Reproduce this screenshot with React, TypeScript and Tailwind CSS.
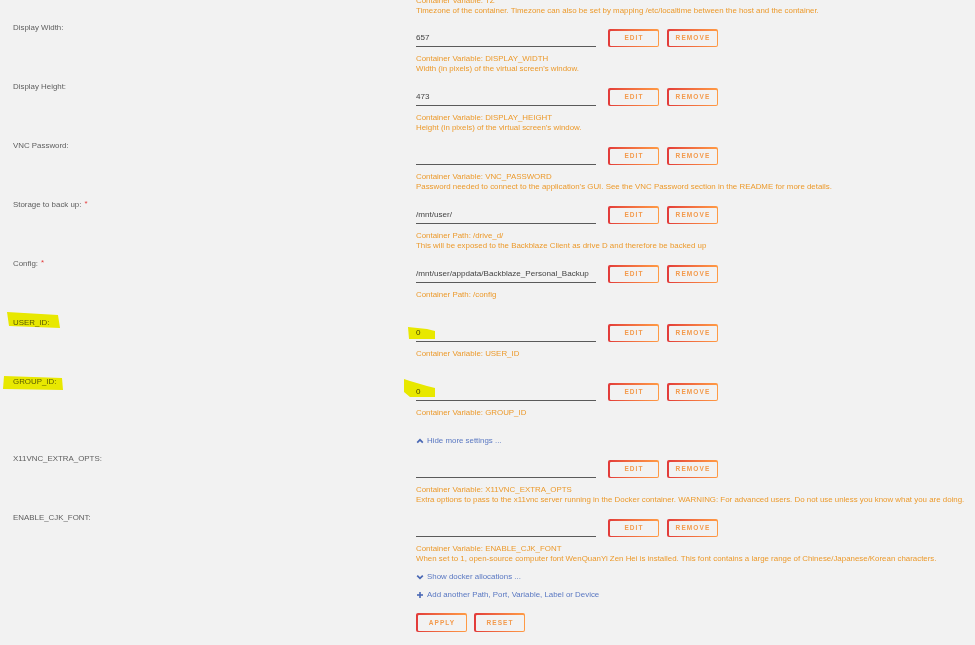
import React from "react";

type Row = {
  label: string;
  required?: boolean;
  value: string;
  desc: string[];
};

const rows1: Row[] = [
  { label: "Display Width:", value: "657", desc: ["Container Variable: DISPLAY_WIDTH", "Width (in pixels) of the virtual screen's window."] },
  { label: "Display Height:", value: "473", desc: ["Container Variable: DISPLAY_HEIGHT", "Height (in pixels) of the virtual screen's window."] },
  { label: "VNC Password:", value: "", desc: ["Container Variable: VNC_PASSWORD", "Password needed to connect to the application's GUI. See the VNC Password section in the README for more details."] },
  { label: "Storage to back up:", required: true, value: "/mnt/user/", desc: ["Container Path: /drive_d/", "This will be exposed to the Backblaze Client as drive D and therefore be backed up"] },
  { label: "Config:", required: true, value: "/mnt/user/appdata/Backblaze_Personal_Backup", desc: ["Container Path: /config"] },
  { label: "USER_ID:", value: "0", desc: ["Container Variable: USER_ID"] },
  { label: "GROUP_ID:", value: "0", desc: ["Container Variable: GROUP_ID"] },
];

const rows2: Row[] = [
  { label: "X11VNC_EXTRA_OPTS:", value: "", desc: ["Container Variable: X11VNC_EXTRA_OPTS", "Extra options to pass to the x11vnc server running in the Docker container. WARNING: For advanced users. Do not use unless you know what you are doing."] },
  { label: "ENABLE_CJK_FONT:", value: "", desc: ["Container Variable: ENABLE_CJK_FONT", "When set to 1, open-source computer font WenQuanYi Zen Hei is installed. This font contains a large range of Chinese/Japanese/Korean characters."] },
];

function Btn({ text, h = 18 }: { text: string; h?: number }) {
  return (
    <div
      className="w-[51px] rounded-[2px] bg-gradient-to-r from-[#e23a3a] to-[#ff9b45] p-[1.5px]"
      style={{ height: h }}
    >
      <div className="flex h-full w-full items-center justify-center rounded-[1px] bg-[#f2f2f2] pl-[1px] text-[6.5px] font-bold tracking-[1.1px] text-[#f39a4c]">
        {text}
      </div>
    </div>
  );
}

function FieldRow({ row }: { row: Row }) {
  return (
    <div className="flex h-[59px]">
      <div className="w-[416px] shrink-0 pl-[13px] text-[7.9px] leading-[10px] text-[#5e5e5e]">
        {row.label}
        {row.required && <span className="relative -top-[1px] ml-[3px] text-[#e53b3b]">*</span>}
      </div>
      <div className="flex flex-col pt-[6px]">
        <div className="flex h-[18px] items-start">
          <div className="h-[18px] w-[180px] border-b-[1.6px] border-[#5a5a5a] text-[8.1px] leading-[17px] text-[#444]">
            {row.value}
          </div>
          <div className="ml-[12px] flex gap-[8px]">
            <Btn text="EDIT" />
            <Btn text="REMOVE" />
          </div>
        </div>
        <div className="mt-[7px] whitespace-nowrap text-[7.9px] leading-[10px] text-[#ec9a2c]">
          {row.desc.map((d, i) => (
            <div key={i}>{d}</div>
          ))}
        </div>
      </div>
    </div>
  );
}

function LinkLine({ icon, text }: { icon: "up" | "down" | "plus"; text: string }) {
  return (
    <div className="flex h-[10px] items-center pl-[416px] text-[7.9px] leading-[10px] text-[#5a78c2]">
      <svg width="8" height="8" viewBox="0 0 8 8" className="mr-[3px]">
        {icon === "up" && <polyline points="1.2,5.6 4,2.8 6.8,5.6" fill="none" stroke="#4a68b4" strokeWidth="1.7" />}
        {icon === "down" && <polyline points="1.2,2.6 4,5.4 6.8,2.6" fill="none" stroke="#4a68b4" strokeWidth="1.7" />}
        {icon === "plus" && (
          <g stroke="#4a68b4" strokeWidth="1.6">
            <line x1="4" y1="1" x2="4" y2="7" />
            <line x1="1" y1="4" x2="7" y2="4" />
          </g>
        )}
      </svg>
      <span>{text}</span>
    </div>
  );
}

export default function App() {
  return (
    <div className="relative h-[645px] w-[975px] overflow-hidden bg-[#f2f2f2] font-['Liberation_Sans',Arial,sans-serif]">
      <div className="mt-[-4px] whitespace-nowrap pl-[416px] text-[7.9px] leading-[10px] text-[#ec9a2c]">
        <div>Container Variable: TZ</div>
        <div>Timezone of the container. Timezone can also be set by mapping /etc/localtime between the host and the container.</div>
      </div>
      <div className="mt-[7px]">
        {rows1.map((r) => (
          <FieldRow key={r.label} row={r} />
        ))}
      </div>
      <LinkLine icon="up" text="Hide more settings ..." />
      <div className="mt-[8px]">
        {rows2.map((r) => (
          <FieldRow key={r.label} row={r} />
        ))}
      </div>
      <LinkLine icon="down" text="Show docker allocations ..." />
      <div className="mt-[8px]">
        <LinkLine icon="plus" text="Add another Path, Port, Variable, Label or Device" />
      </div>
      <div className="mt-[13px] flex gap-[7px] pl-[416px]">
        <Btn text="APPLY" h={19} />
        <Btn text="RESET" h={19} />
      </div>

      {/* highlighter marks */}
      <svg className="pointer-events-none absolute left-0 top-0 mix-blend-multiply" width="975" height="645">
        <polygon points="7,312 58,315 60,328 9,326" fill="#f5f500" />
        <polygon points="4,376 62,378 63,390 3,389" fill="#f5f500" />
        <polygon points="408,327 427,329 435,331 435,339 409,339" fill="#f5f500" />
        <polygon points="404,379 410,381 427,386 435,388 435,397 410,397 404,392" fill="#f5f500" />
      </svg>
    </div>
  );
}
